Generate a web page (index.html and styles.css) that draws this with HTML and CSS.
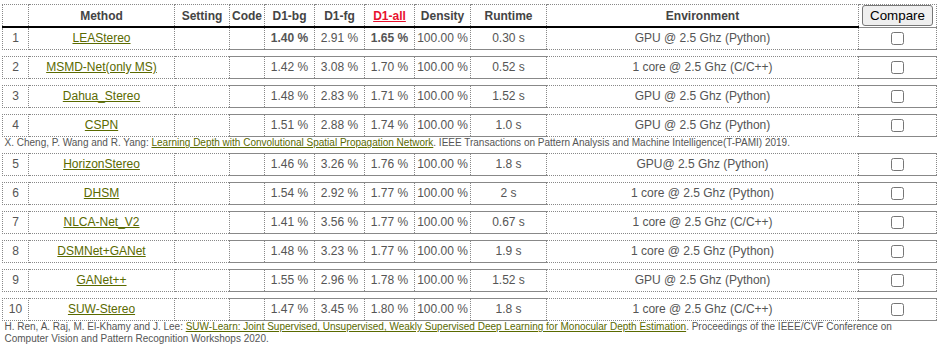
FILE: index.html
```html
<!DOCTYPE html>
<html>
<head>
<meta charset="utf-8">
<title>Results</title>
<link rel="stylesheet" href="styles.css">
</head>
<body>
<table class="results">
  <colgroup>
    <col class="c-rank"><col class="c-method"><col class="c-setting"><col class="c-code">
    <col class="c-num"><col class="c-num"><col class="c-num"><col class="c-density">
    <col class="c-runtime"><col class="c-env"><col class="c-cmp">
  </colgroup>
  <thead>
    <tr>
      <th></th>
      <th>Method</th>
      <th>Setting</th>
      <th>Code</th>
      <th>D1-bg</th>
      <th>D1-fg</th>
      <th><a class="sort" href="#">D1-all</a></th>
      <th>Density</th>
      <th>Runtime</th>
      <th>Environment</th>
      <th class="cmp"><button class="btn">Compare</button></th>
    </tr>
  </thead>
  <tbody>
    <tr class="row">
      <td>1</td><td><a href="#">LEAStereo</a></td><td></td><td class="s"></td>
      <td class="s"><b>1.40 %</b></td><td class="s">2.91 %</td><td class="s"><b>1.65 %</b></td><td class="s">100.00 %</td><td class="s">0.30 s</td>
      <td>GPU @ 2.5 Ghz (Python)</td><td class="s"><input type="checkbox"></td>
    </tr>
    <tr class="gap"><td colspan="11"></td></tr>
    <tr class="row">
      <td>2</td><td><a href="#">MSMD-Net(only MS)</a></td><td></td><td class="s"></td>
      <td class="s">1.42 %</td><td class="s">3.08 %</td><td class="s">1.70 %</td><td class="s">100.00 %</td><td class="s">0.52 s</td>
      <td>1 core @ 2.5 Ghz (C/C++)</td><td class="s"><input type="checkbox"></td>
    </tr>
    <tr class="gap"><td colspan="11"></td></tr>
    <tr class="row">
      <td>3</td><td><a href="#">Dahua_Stereo</a></td><td></td><td class="s"></td>
      <td class="s">1.48 %</td><td class="s">2.83 %</td><td class="s">1.71 %</td><td class="s">100.00 %</td><td class="s">1.52 s</td>
      <td>GPU @ 2.5 Ghz (Python)</td><td class="s"><input type="checkbox"></td>
    </tr>
    <tr class="gap"><td colspan="11"></td></tr>
    <tr class="row">
      <td>4</td><td><a href="#">CSPN</a></td><td></td><td class="s"></td>
      <td class="s">1.51 %</td><td class="s">2.88 %</td><td class="s">1.74 %</td><td class="s">100.00 %</td><td class="s">1.0 s</td>
      <td>GPU @ 2.5 Ghz (Python)</td><td class="s"><input type="checkbox"></td>
    </tr>
    <tr class="cite"><td colspan="11">X. Cheng, P. Wang and R. Yang: <a href="#">Learning Depth with Convolutional Spatial Propagation Network</a>. IEEE Transactions on Pattern Analysis and Machine Intelligence(T-PAMI) 2019.</td></tr>
    <tr class="row">
      <td>5</td><td><a href="#">HorizonStereo</a></td><td></td><td class="s"></td>
      <td class="s">1.46 %</td><td class="s">3.26 %</td><td class="s">1.76 %</td><td class="s">100.00 %</td><td class="s">1.8 s</td>
      <td>GPU@ 2.5 Ghz (Python)</td><td class="s"><input type="checkbox"></td>
    </tr>
    <tr class="gap"><td colspan="11"></td></tr>
    <tr class="row">
      <td>6</td><td><a href="#">DHSM</a></td><td></td><td class="s"></td>
      <td class="s">1.54 %</td><td class="s">2.92 %</td><td class="s">1.77 %</td><td class="s">100.00 %</td><td class="s">2 s</td>
      <td>1 core @ 2.5 Ghz (Python)</td><td class="s"><input type="checkbox"></td>
    </tr>
    <tr class="gap"><td colspan="11"></td></tr>
    <tr class="row">
      <td>7</td><td><a href="#">NLCA-Net_V2</a></td><td></td><td class="s"></td>
      <td class="s">1.41 %</td><td class="s">3.56 %</td><td class="s">1.77 %</td><td class="s">100.00 %</td><td class="s">0.67 s</td>
      <td>1 core @ 2.5 Ghz (C/C++)</td><td class="s"><input type="checkbox"></td>
    </tr>
    <tr class="gap"><td colspan="11"></td></tr>
    <tr class="row">
      <td>8</td><td><a href="#">DSMNet+GANet</a></td><td></td><td class="s"></td>
      <td class="s">1.48 %</td><td class="s">3.23 %</td><td class="s">1.77 %</td><td class="s">100.00 %</td><td class="s">1.9 s</td>
      <td>1 core @ 2.5 Ghz (Python)</td><td class="s"><input type="checkbox"></td>
    </tr>
    <tr class="gap"><td colspan="11"></td></tr>
    <tr class="row">
      <td>9</td><td><a href="#">GANet++</a></td><td></td><td class="s"></td>
      <td class="s">1.55 %</td><td class="s">2.96 %</td><td class="s">1.78 %</td><td class="s">100.00 %</td><td class="s">1.52 s</td>
      <td>GPU @ 2.5 Ghz (Python)</td><td class="s"><input type="checkbox"></td>
    </tr>
    <tr class="gap"><td colspan="11"></td></tr>
    <tr class="row">
      <td>10</td><td><a href="#">SUW-Stereo</a></td><td></td><td class="s"></td>
      <td class="s">1.47 %</td><td class="s">3.45 %</td><td class="s">1.80 %</td><td class="s">100.00 %</td><td class="s">1.8 s</td>
      <td>1 core @ 2.5 Ghz (C/C++)</td><td class="s"><input type="checkbox"></td>
    </tr>
    <tr class="cite"><td colspan="11">H. Ren, A. Raj, M. El-Khamy and J. Lee: <a href="#">SUW-Learn: Joint Supervised, Unsupervised, Weakly Supervised Deep Learning for Monocular Depth Estimation</a>. Proceedings of the IEEE/CVF Conference on Computer Vision and Pattern Recognition Workshops 2020.</td></tr>
  </tbody>
</table>
</body>
</html>
```
FILE: styles.css
```css
body {
  margin: 0;
  background: #fff;
  font-family: "Liberation Sans", Arial, sans-serif;
  font-size: 12px;
  color: #555;
}

.results {
  border-collapse: collapse;
  table-layout: fixed;
  width: 934px;
  margin: 4px 0 0 2px;
}

.c-rank { width: 26px; }
.c-method { width: 146px; }
.c-setting { width: 55px; }
.c-code { width: 35px; }
.c-num { width: 50px; }
.c-density { width: 56px; }
.c-runtime { width: 76px; }
.c-env { width: 312px; }
.c-cmp { width: 78px; }

.results th,
.results td {
  padding: 0;
  text-align: center;
  white-space: nowrap;
  border: 1px dotted #888;
}

.results th {
  height: 21px;
  font-weight: bold;
  color: #444;
  border-bottom: 2px solid #000;
}

.results th.cmp {
  border-bottom: 1px dotted #888;
}

.results .row td {
  height: 21px;
  line-height: 21px;
}

.results .row td.s {
  border-top: 1px solid #888;
  border-bottom: 1px solid #888;
}

.results .gap td {
  height: 6px;
  padding: 0;
  line-height: 0;
  border: none;
}

.results .cite td {
  border: none;
  text-align: left;
  white-space: normal;
  font-size: 10px;
  line-height: 12px;
  padding: 0 0 4px 2px;
}

a {
  color: #5a6a00;
  text-decoration: underline;
}

a.sort {
  color: #e8112d;
}

.btn {
  font-family: "Liberation Sans", Arial, sans-serif;
  font-size: 13.33px;
  line-height: 15px;
  color: #000;
  background: #efefef;
  border: 1px solid #767676;
  border-radius: 3px;
  padding: 2px 7px;
  vertical-align: middle;
}

input[type="checkbox"] {
  margin: 0;
  width: 13px;
  height: 13px;
  vertical-align: middle;
}
```
